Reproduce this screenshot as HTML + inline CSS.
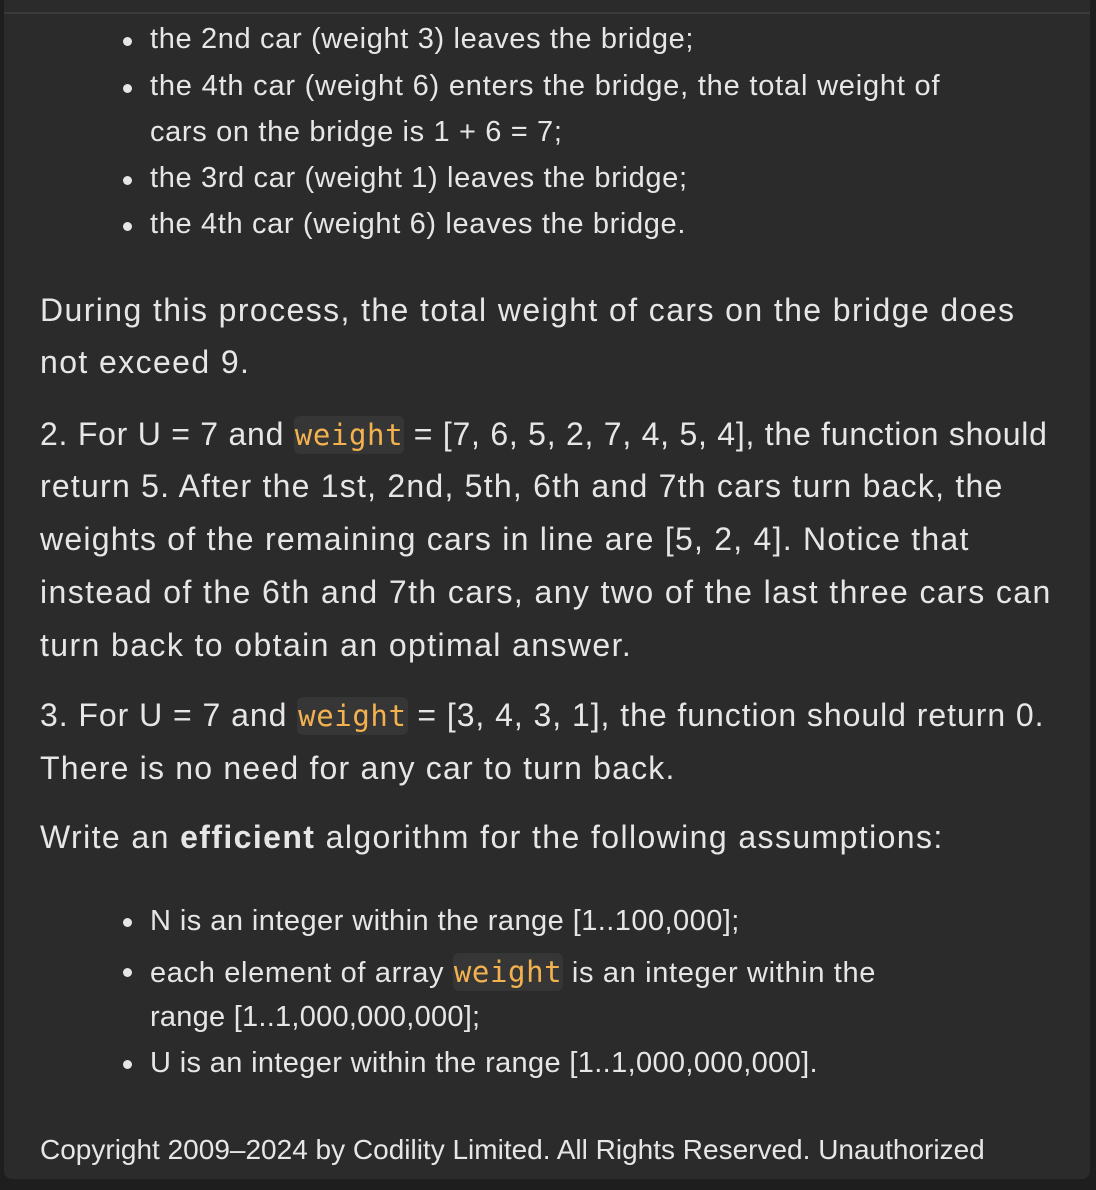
<!DOCTYPE html>
<html><head><meta charset="utf-8"><style>
html,body{margin:0;padding:0;background:#1e1e1e;width:1096px;height:1190px;overflow:hidden}
.panel{position:absolute;left:4px;top:0;width:1086px;height:1179px;background:#2b2b2b;border-radius:0 0 8px 8px}
.hr{position:absolute;left:4px;top:12px;width:1086px;height:2px;background:#3b3b3b}
.t{position:absolute;font-family:"Liberation Sans",sans-serif;color:#e6e6e6;white-space:nowrap}
.b{font-size:29px;left:150px;letter-spacing:0.65px}
.p{font-size:32px;left:40px;letter-spacing:1.4px}
.dot{position:absolute;left:123px;width:9px;height:9px;border-radius:50%;background:#e6e6e6}
code{font-family:"DejaVu Sans Mono","Liberation Mono",monospace;color:#f3b24f;background:#363636;border-radius:6px;padding:2px 1px;font-size:29px;letter-spacing:0.6px}
</style></head><body>
<div class="panel"></div><div class="hr"></div>

<div class="dot" style="top:37px"></div><div class="t b" style="top:23px">the 2nd car (weight 3) leaves the bridge;</div>
<div class="dot" style="top:84px"></div><div class="t b" style="top:70px;letter-spacing:0.8px">the 4th car (weight 6) enters the bridge, the total weight of</div>
<div class="t b" style="top:116px">cars on the bridge is 1 + 6 = 7;</div>
<div class="dot" style="top:176px"></div><div class="t b" style="top:162px">the 3rd car (weight 1) leaves the bridge;</div>
<div class="dot" style="top:222px"></div><div class="t b" style="top:208px">the 4th car (weight 6) leaves the bridge.</div>

<div class="t p" style="top:292px">During this process, the total weight of cars on the bridge does</div>
<div class="t p" style="top:344px">not exceed 9.</div>

<div class="t p" style="top:416px;letter-spacing:0.75px">2. For U = 7 and <code>weight</code> = [7, 6, 5, 2, 7, 4, 5, 4], the function should</div>
<div class="t p" style="top:468px;letter-spacing:1.23px">return 5. After the 1st, 2nd, 5th, 6th and 7th cars turn back, the</div>
<div class="t p" style="top:521px;letter-spacing:1.24px">weights of the remaining cars in line are [5, 2, 4]. Notice that</div>
<div class="t p" style="top:574px">instead of the 6th and 7th cars, any two of the last three cars can</div>
<div class="t p" style="top:627px">turn back to obtain an optimal answer.</div>

<div class="t p" style="top:697px;letter-spacing:0.95px">3. For U = 7 and <code>weight</code> = [3, 4, 3, 1], the function should return 0.</div>
<div class="t p" style="top:750px;letter-spacing:1.2px">There is no need for any car to turn back.</div>

<div class="t p" style="top:819px">Write an <b>efficient</b> algorithm for the following assumptions:</div>

<div class="dot" style="top:918px"></div><div class="t b" style="top:905px;letter-spacing:0.45px">N is an integer within the range [1..100,000];</div>
<div class="dot" style="top:968px"></div><div class="t b" style="top:955px">each element of array <code>weight</code> is an integer within the</div>
<div class="t b" style="top:1001px;letter-spacing:0.25px">range [1..1,000,000,000];</div>
<div class="dot" style="top:1060px"></div><div class="t b" style="top:1047px;letter-spacing:0.35px">U is an integer within the range [1..1,000,000,000].</div>

<div class="t" style="left:40px;top:1134px;font-size:28px">Copyright 2009–2024 by Codility Limited. All Rights Reserved. Unauthorized</div>
</body></html>
